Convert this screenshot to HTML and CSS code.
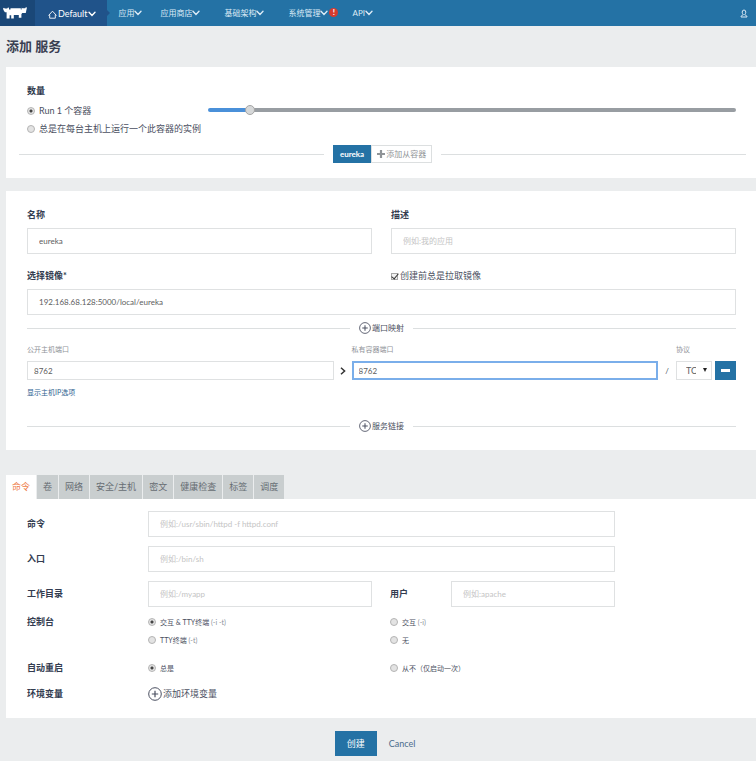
FILE: index.html
```html
<!DOCTYPE html>
<html lang="zh-CN">
<head>
<meta charset="utf-8">
<meta name="viewport" content="width=device-width, initial-scale=1">
<title>添加 服务</title>
<link rel="stylesheet" href="styles.css">
</head>
<body>
<svg class="sprite" aria-hidden="true">
  <symbol id="chevron" viewBox="0 0 8 6"><path d="M1 1.2 4 4.4 7 1.2" fill="none" stroke="currentColor" stroke-width="1.4" stroke-linecap="round"/></symbol>
  <symbol id="plus-circle" viewBox="0 0 14 14"><circle cx="7" cy="7" r="6.3" fill="none" stroke="currentColor" stroke-width="1"/><path d="M7 3.8v6.4M3.8 7h6.4" stroke="currentColor" stroke-width="1.2"/></symbol>
</svg>

<header class="topbar">
  <a class="logo" href="#" aria-label="Rancher">
    <svg viewBox="0 0 24 12"><path d="M0 1.500 1 .7l.8.900h2.400L5.200.3l.8.900v1.300h1.500V1.200h10.300V2.500h.8V.8l.9.500h2.700l.8-1.300.9.700-.5 2.300-.6 3h-3.600l-.8 1.200v3.600h-2.600V8H10.800v3.400H8.200V8.200H6.600v3.200H3.600V5.300H1.900L.6 3.200z" fill="#fff"/></svg>
  </a>
  <a class="env" href="#">
    <svg class="home" viewBox="0 0 9 9"><path d="M.5 5.500 4.500 1.200l4 4.300M1.700 4.600v3.600h5.600V4.600" fill="none" stroke="currentColor" stroke-width=".9"/></svg>
    <span>Default</span>
    <svg class="chev"><use href="#chevron"/></svg>
  </a>
  <nav class="menu">
    <a href="#">应用<svg class="chev"><use href="#chevron"/></svg></a>
    <a href="#">应用商店<svg class="chev"><use href="#chevron"/></svg></a>
    <a href="#">基础架构<svg class="chev"><use href="#chevron"/></svg></a>
    <a href="#">系统管理<svg class="chev"><use href="#chevron"/></svg><b class="alert">!</b></a>
    <a href="#">API<svg class="chev"><use href="#chevron"/></svg></a>
  </nav>
  <a class="user" href="#" aria-label="用户">
    <svg viewBox="0 0 8 9"><path d="M2.200 3.200a1.800 2.200 0 0 1 3.600 0c0 1-.4 1.700-1 2.200v.6c1.300.2 2.100.7 2.200 2H1c.1-1.300.9-1.800 2.200-2v-.6c-.6-.5-1-1.200-1-2.200z" fill="none" stroke="currentColor"/></svg>
  </a>
</header>

<main class="page">
  <h1>添加 服务</h1>

  <section class="card scale">
    <h2 class="label">数量</h2>
    <div class="scale-grid">
      <label class="choice"><input type="radio" name="scale" checked><span>Run 1 个容器</span></label>
      <input class="slider" type="range" min="0" max="14" value="1" aria-label="数量">
      <label class="choice whole"><input type="radio" name="scale"><span>总是在每台主机上运行一个此容器的实例</span></label>
    </div>
    <div class="rule wide">
      <div class="pills">
        <button class="pill on" type="button">eureka</button>
        <button class="pill" type="button"><svg viewBox="0 0 8 8"><path d="M4 0v8M0 4h8" stroke="currentColor" stroke-width="2.200"/></svg>添加从容器</button>
      </div>
    </div>
  </section>

  <section class="card">
    <div class="halves">
      <div class="field">
        <label class="label" for="name">名称</label>
        <input class="text" id="name" type="text" value="eureka">
      </div>
      <div class="field">
        <label class="label" for="desc">描述</label>
        <input class="text" id="desc" type="text" placeholder="例如:我的应用">
      </div>
      <label class="label" for="image">选择镜像*</label>
      <label class="pull"><input type="checkbox" checked><span>创建前总是拉取镜像</span></label>
    </div>
    <input class="text image" id="image" type="text" value="192.168.68.128:5000/local/eureka">

    <div class="rule ports-rule"><button class="add" type="button"><svg><use href="#plus-circle"/></svg>端口映射</button></div>

    <div class="ports">
      <label class="hint pub" for="public">公开主机端口</label>
      <label class="hint priv" for="private">私有容器端口</label>
      <label class="hint proto" for="protocol">协议</label>
      <input class="text short" id="public" type="text" value="8762">
      <svg class="arrow" viewBox="0 0 6 8"><path d="M1 .8 4.600 4 1 7.200" fill="none" stroke="currentColor" stroke-width="1.500"/></svg>
      <input class="text short focus" id="private" type="text" value="8762">
      <span class="slash">/</span>
      <div class="select">
        <select id="protocol"><option>TCP</option><option>UDP</option></select>
        <svg viewBox="0 0 4 4"><path d="M0 0h4L2 4z" fill="currentColor"/></svg>
      </div>
      <button class="remove" type="button" aria-label="删除"><svg viewBox="0 0 9 3"><path d="M0 0h9v3H0z" fill="#fff"/></svg></button>
    </div>
    <a class="host-ip" href="#">显示主机IP选项</a>

    <div class="rule links-rule"><button class="add" type="button"><svg><use href="#plus-circle"/></svg>服务链接</button></div>
  </section>

  <div class="tabs" role="tablist">
    <button class="tab on" type="button" role="tab" aria-selected="true">命令</button>
    <button class="tab" type="button" role="tab">卷</button>
    <button class="tab" type="button" role="tab">网络</button>
    <button class="tab" type="button" role="tab">安全/主机</button>
    <button class="tab" type="button" role="tab">密文</button>
    <button class="tab" type="button" role="tab">健康检查</button>
    <button class="tab" type="button" role="tab">标签</button>
    <button class="tab" type="button" role="tab">调度</button>
  </div>
  <section class="card command">
    <div class="row">
      <label class="label" for="cmd">命令</label>
      <input class="text span" id="cmd" type="text" placeholder="例如:/usr/sbin/httpd -f httpd.conf">
    </div>
    <div class="row">
      <label class="label" for="entry">入口</label>
      <input class="text span" id="entry" type="text" placeholder="例如:/bin/sh">
    </div>
    <div class="row">
      <label class="label" for="dir">工作目录</label>
      <input class="text dir" id="dir" type="text" placeholder="例如:/myapp">
      <label class="label" for="usr">用户</label>
      <input class="text" id="usr" type="text" placeholder="例如:apache">
    </div>
    <div class="row console" role="radiogroup" aria-label="控制台">
      <span class="label">控制台</span>
      <label class="choice small"><input type="radio" name="tty" checked><span>交互 &amp; TTY终端 <i>(-i -t)</i></span></label>
      <label class="choice small rest"><input type="radio" name="tty"><span>交互 <i>(-i)</i></span></label>
      <label class="choice small second"><input type="radio" name="tty"><span>TTY终端 <i>(-t)</i></span></label>
      <label class="choice small rest"><input type="radio" name="tty"><span>无</span></label>
    </div>
    <div class="row restart" role="radiogroup" aria-label="自动重启">
      <span class="label">自动重启</span>
      <label class="choice small"><input type="radio" name="restart" checked><span>总是</span></label>
      <label class="choice small rest"><input type="radio" name="restart"><span>从不（仅启动一次）</span></label>
    </div>
    <div class="row env-row">
      <span class="label">环境变量</span>
      <button class="add large" type="button"><svg><use href="#plus-circle"/></svg>添加环境变量</button>
    </div>
  </section>

  <footer class="actions">
    <button class="create" type="button">创建</button>
    <a class="cancel" href="#">Cancel</a>
  </footer>
</main>
</body>
</html>
```
FILE: styles.css
```css
* { box-sizing: border-box; }

body {
  margin: 0;
  background: #ebedee;
  color: #4b5061;
  font: 9px/12px Lato, "Noto Sans CJK SC", sans-serif;
}

button, input, select { margin: 0; font: inherit; color: inherit; }
button { border: 0; padding: 0; background: none; cursor: pointer; }
a { color: inherit; text-decoration: none; }
svg { display: block; flex: none; }
.sprite { display: none; }

/* top bar */
.topbar {
  display: flex;
  height: 26px;
  background: #2472a5;
  color: #dcebf6;
}
.logo {
  display: flex;
  align-items: center;
  width: 35px;
  padding-left: 3px;
  background: #1a4777;
}
.logo svg { width: 24px; height: 12px; }
.env {
  display: flex;
  align-items: center;
  position: relative;
  gap: 1px;
  padding: 2px 11px 0 13px;
  background: #20538a;
  color: #fff;
}
.env::after {
  content: "";
  position: absolute;
  left: 100%;
  top: 10px;
  border: 3px solid transparent;
  border-left-color: #20538a;
  border-right: 0;
}
.home { width: 9px; height: 9px; }
.chev { width: 8px; height: 6px; }
.menu { display: flex; flex: 1; gap: 24px; padding-left: 11px; font-size: 8px; }
.menu a { display: flex; align-items: center; position: relative; }
.menu a:first-child { margin-right: -6px; }
.alert {
  position: absolute;
  left: 100%;
  top: 8px;
  width: 9px;
  height: 9px;
  margin-left: 1px;
  border-radius: 50%;
  background: #d63b2f;
  color: #fff;
  font-size: 8px;
  line-height: 9px;
  text-align: center;
}
.user { display: flex; align-items: center; padding-right: 8px; }
.user svg { width: 8px; height: 9px; }

/* page */
.page { padding: 0 0 5px 6px; }
h1 {
  margin: 0;
  color: #3a3f52;
  font-size: 13px;
  line-height: 41px;
  font-weight: 700;
}
.card { margin-bottom: 13px; padding: 18px 20px 15px 21px; background: #fff; }
.label { display: block; margin: 0; color: #333c50; font-size: 9px; line-height: 12px; font-weight: 700; }

.text {
  display: block;
  width: 100%;
  min-width: 0;
  height: 26px;
  padding: 0 11px;
  border: 1px solid #dfe1e2;
  border-radius: 0;
  background: #fff;
  color: #5d5d5d;
  font-size: 8px;
  outline: 0;
}
.text::placeholder { color: #c4c4c4; opacity: 1; }
.short { height: 19px; padding: 0 6px; }
.focus { border: 2px solid #7aaeea; padding: 0 5px; }

.choice { display: flex; align-items: center; gap: 4px; height: 18px; }
.choice.small { font-size: 7px; }
.choice i { color: #8b8f99; font-style: normal; }
input[type="radio"] {
  appearance: none;
  flex: none;
  width: 8px;
  height: 8px;
  border: 1px solid #b4b4b4;
  border-radius: 50%;
  background: #e3e3e3;
}
input[type="radio"]:checked { background: radial-gradient(circle, #444 0 1px, #e3e3e3 2px); }

/* scale */
.scale-grid { display: grid; grid-template-columns: 181fr 528fr; margin: 5px 0 7px; }
.whole { grid-column: 1 / -1; }
.slider {
  appearance: none;
  width: 100%;
  height: 16px;
  background: none;
}
.slider::-webkit-slider-runnable-track {
  height: 4px;
  border-radius: 2px;
  background: linear-gradient(90deg, #4a90d9 8%, #989da2 8%);
}
.slider::-webkit-slider-thumb {
  appearance: none;
  width: 10px;
  height: 10px;
  margin-top: -3px;
  border: 1px solid #a5a5a5;
  border-radius: 50%;
  background: #d6d8d9;
}

/* horizontal rule with content in its middle */
.rule { display: flex; align-items: center; gap: 9px; }
.rule::before, .rule::after { content: ""; flex: 1; height: 1px; background: #dcdfe0; }
.wide { margin: 0 -10px 0 -8px; }
.pills { display: flex; height: 18px; }
.pill {
  display: flex;
  align-items: center;
  gap: 1px;
  padding: 0 5px;
  border: 1px solid #dcdfe0;
  color: #909497;
  font-size: 8px;
}
.pill.on { padding: 0 6px; border-color: #2472a5; background: #2472a5; color: #fff; font-weight: 700; }
.pill svg { width: 8px; height: 8px; }
.add { display: flex; align-items: center; gap: 1px; height: 14px; font-size: 8px; }
.add svg { width: 12px; height: 12px; }
.large { font-size: 9px; height: 18px; }
.large svg { width: 14px; height: 14px; }

/* name, image */
.halves { display: grid; grid-template-columns: 1fr 1fr; gap: 16px 19px; }
.field .label { margin-bottom: 7px; }
.pull { display: flex; align-items: center; gap: 2px; height: 12px; }
.pull input {
  appearance: none;
  width: 7px;
  height: 7px;
  border: 1px solid #a8a8a8;
  background: #f2f2f2;
  position: relative;
}
.pull input:checked::after {
  content: "";
  position: absolute;
  left: 1px;
  top: -2px;
  width: 3px;
  height: 6px;
  border: solid #333;
  border-width: 0 1px 1px 0;
  transform: rotate(40deg);
}
.image { margin-top: 7px; }

/* ports */
.ports-rule { margin: 6px 0 8px; }
.ports {
  display: grid;
  grid-template-columns: minmax(0, 1fr) 18px minmax(0, 1fr) 18px 36px 24px;
  row-gap: 6px;
  align-items: center;
}
.hint { color: #909399; font-size: 7px; line-height: 12px; }
.pub { grid-column: 1; }
.priv { grid-column: 3; }
.proto { grid-column: 5 / -1; }
.arrow { width: 6px; height: 8px; justify-self: center; color: #333; }
.slash { text-align: center; font-size: 8px; }
.select { position: relative; }
.select select {
  appearance: none;
  display: block;
  width: 100%;
  height: 19px;
  padding: 0 15px 0 9px;
  border: 1px solid #dfe1e2;
  border-radius: 0;
  background: #fff;
  color: #5d5d5d;
}
.select svg { position: absolute; right: 5px; top: 7px; width: 4px; height: 4px; color: #222; }
.remove {
  display: flex;
  align-items: center;
  justify-content: center;
  height: 19px;
  margin-left: 3px;
  background: #2472a5;
}
.remove svg { width: 9px; height: 3px; }
.host-ip { display: table; margin-top: 6px; color: #2d6391; font-size: 7px; }
.links-rule { margin: 21px 0 2px; }

/* tabs */
.tabs { display: flex; gap: 1px; margin-top: 25px; }
.tab { height: 24px; padding: 0 6px; background: #c9cecf; color: #676d73; }
.tab.on { background: #fff; color: #ee7d4b; }

/* command */
.command { padding-top: 12px; }
.row {
  display: grid;
  grid-template-columns: 121fr 242fr 61fr 164fr 121fr;
  align-items: center;
  margin-bottom: 9px;
}
.span { grid-column: 2 / 5; }
.dir { width: auto; margin-right: 18px; }
.rest { grid-column: 3 / -1; }
.second { grid-column: 2; }
.console { margin: -3px 0 10px; }
.restart { margin-bottom: 8px; }
.env-row { margin-bottom: 0; }

/* actions */
.actions { display: flex; justify-content: center; align-items: center; }
.create { height: 25px; padding: 0 12px; background: #2472a5; color: #fff; }
.cancel { padding: 0 12px; color: #4a6c8c; }
```
